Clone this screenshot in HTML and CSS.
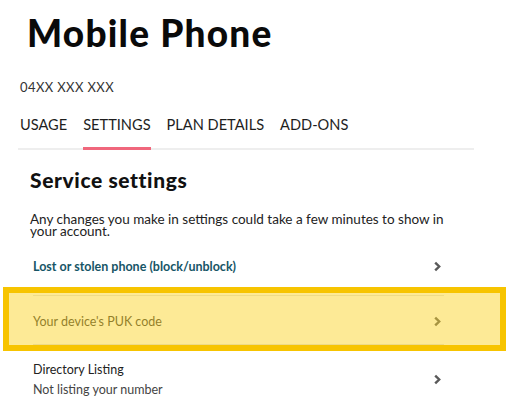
FILE: index.html
```html
<!DOCTYPE html>
<html lang="en">
<head>
<meta charset="utf-8">
<title>Mobile Phone</title>
<link rel="stylesheet" href="styles.css">
</head>
<body>
<div class="page">
  <h1 class="title">Mobile Phone</h1>
  <div class="number">04XX XXX XXX</div>
  <nav class="tabs">
    <span class="tab">USAGE</span>
    <span class="tab active">SETTINGS</span>
    <span class="tab">PLAN DETAILS</span>
    <span class="tab">ADD-ONS</span>
  </nav>
  <section class="section">
    <h2 class="section-title">Service settings</h2>
    <p class="note">Any changes you make in settings could take a few minutes to show in your account.</p>
    <ul class="list">
      <li class="row first">
        <span class="row-text link">Lost or stolen phone (block/unblock)</span>
        <svg class="chev" viewBox="0 0 9 11" width="9" height="11"><path d="M2.2 1.6 L6.2 5.5 L2.2 9.4" fill="none" stroke="#5a5a5a" stroke-width="2.4"/></svg>
      </li>
      <li class="row puk">
        <span class="row-text">Your device's PUK code</span>
        <svg class="chev" viewBox="0 0 9 11" width="9" height="11"><path d="M2.2 1.6 L6.2 5.5 L2.2 9.4" fill="none" stroke="#5a5a5a" stroke-width="2.4"/></svg>
      </li>
      <li class="row dir">
        <span class="row-text">
          <span class="row-main">Directory Listing</span>
          <span class="row-sub">Not listing your number</span>
        </span>
        <svg class="chev" viewBox="0 0 9 11" width="9" height="11"><path d="M2.2 1.6 L6.2 5.5 L2.2 9.4" fill="none" stroke="#5a5a5a" stroke-width="2.4"/></svg>
      </li>
    </ul>
  </section>
  <div class="highlight"></div>
</div>
</body>
</html>
```

FILE: styles.css
```css
* { box-sizing: border-box; }
html, body { margin: 0; padding: 0; background: #fff; }
body { font-family: "Lato", "Liberation Sans", sans-serif; color: #222; }
.page { position: relative; width: 511px; height: 400px; overflow: hidden; }
.title {
  margin: 0;
  padding: 12px 0 0 27px;
  font-size: 37px;
  font-weight: 900;
  line-height: 42px;
  color: #0a0a0a;
  letter-spacing: 1.2px;
}
.number {
  margin-top: 25px;
  padding-left: 20px;
  font-size: 13px;
  line-height: 16px;
  color: #333;
  letter-spacing: 0.4px;
}
.tabs {
  display: flex;
  gap: 16px;
  margin: 21px 37px 0 18px;
  padding-left: 2px;
  border-bottom: 2px solid #eeeeee;
}
.tab {
  font-size: 14.6px;
  line-height: 18px;
  padding-bottom: 13px;
  color: #1e1e1e;
  border-bottom: 3px solid transparent;
  margin-bottom: -2px;
}
.tab.active { border-bottom-color: #f0677c; }
.section { padding: 0 0 0 30px; }
.section-title {
  margin: 18px 0 0;
  font-size: 21px;
  font-weight: 900;
  line-height: 24px;
  color: #111;
  letter-spacing: 0.6px;
}
.note {
  margin: 21px 40px 0 0;
  font-size: 13.5px;
  line-height: 12px;
  color: #222;
}
.list { list-style: none; margin: 13px 0 0; padding: 0 0 0 3px; width: 414px; }
.row {
  display: flex;
  align-items: center;
  justify-content: space-between;
  border-bottom: 1px solid #e2e2e2;
  padding-right: 2px;
}
.row.first { height: 46px; padding-bottom: 12px; }
.row.puk { height: 49px; padding-top: 2px; }
.row.dir { height: 60px; border-bottom: none; padding-top: 8px; }
.row-text { font-size: 12.5px; color: #333; }
.link { color: #165566; font-weight: 700; }
.row.dir .row-text { display: flex; flex-direction: column; gap: 5px; }
.row-main { color: #222; }
.row-sub { color: #444; }
.chev { display: block; }
.highlight {
  position: absolute;
  left: 3px;
  top: 287px;
  width: 503px;
  height: 64px;
  border: 6px solid #f7c400;
  background: rgba(250, 212, 35, 0.48);
}
```
